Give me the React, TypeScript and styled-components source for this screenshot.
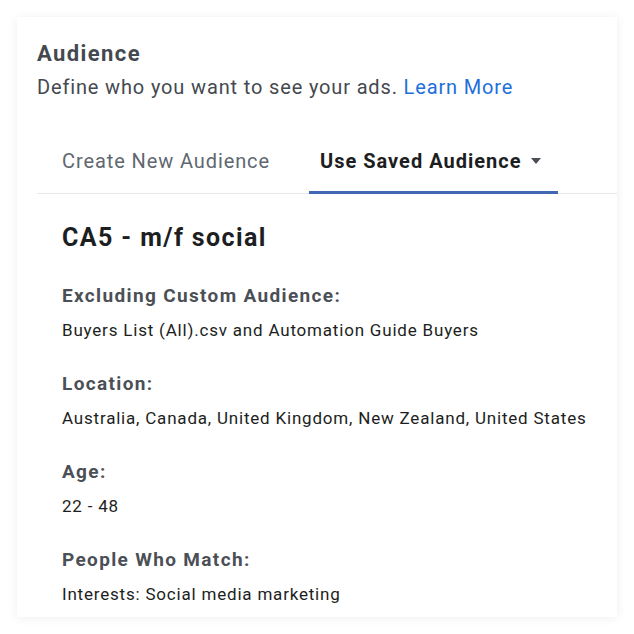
import React from 'react';
import styled, { createGlobalStyle } from 'styled-components';

const Global = createGlobalStyle`
  body {
    margin: 0;
    background: #ffffff;
    font-family: Roboto, "Liberation Sans", sans-serif;
  }
`;

const Page = styled.div`
  padding: 17px;
`;

const Card = styled.div`
  width: 600px;
  height: 600px;
  box-sizing: border-box;
  background: #fff;
  box-shadow: 0 1px 10px rgba(0, 0, 0, 0.07);
  padding: 23px 0 0 20px;
  overflow: hidden;
`;

const Title = styled.h2`
  margin: 0;
  font-size: 22px;
  line-height: 28px;
  font-weight: 700;
  letter-spacing: 1.4px;
  color: #444950;
`;

const Subtitle = styled.p`
  margin: 7px 0 0;
  font-size: 20px;
  line-height: 24px;
  letter-spacing: 0.85px;
  color: #444950;
`;

const Link = styled.a`
  color: #216fdb;
  text-decoration: none;
`;

const Tabs = styled.div`
  display: flex;
  gap: 28px;
  margin-top: 50px;
  padding-left: 14px;
  border-bottom: 1px solid #e6e7e9;
`;

const Tab = styled.div<{ $active?: boolean }>`
  display: flex;
  align-items: center;
  gap: 10px;
  padding: 0 ${p => (p.$active ? 17 : 11)}px 18px 11px;
  font-size: 20px;
  line-height: 24px;
  letter-spacing: ${p => (p.$active ? 1 : 0.9)}px;
  font-weight: ${p => (p.$active ? 700 : 400)};
  color: ${p => (p.$active ? '#1c1e21' : '#606770')};
  border-bottom: 3px solid ${p => (p.$active ? '#4267b2' : 'transparent')};
  margin-bottom: -1px;
`;

const Caret = styled.span`
  width: 0;
  height: 0;
  border-left: 5px solid transparent;
  border-right: 5px solid transparent;
  border-top: 6px solid #4b4f56;
`;

const Content = styled.div`
  padding: 29px 0 0 25px;
`;

const Name = styled.h3`
  margin: 0 0 31px;
  font-size: 25px;
  line-height: 30px;
  font-weight: 700;
  letter-spacing: 1.4px;
  color: #1c1e21;
`;

const Field = styled.div`
  margin-bottom: 30px;
`;

const Label = styled.div`
  font-size: 19px;
  line-height: 24px;
  font-weight: 700;
  letter-spacing: 1.35px;
  color: #4b4f56;
`;

const Value = styled.div`
  margin-top: 10px;
  font-size: 17px;
  line-height: 24px;
  letter-spacing: 0.8px;
  color: #1c1e21;
`;

const fields = [
  { label: 'Excluding Custom Audience:', value: 'Buyers List (All).csv and Automation Guide Buyers' },
  { label: 'Location:', value: 'Australia, Canada, United Kingdom, New Zealand, United States' },
  { label: 'Age:', value: '22 - 48' },
  { label: 'People Who Match:', value: 'Interests: Social media marketing' },
];

export default function App() {
  return (
    <Page>
      <Global />
      <Card>
        <Title>Audience</Title>
        <Subtitle>
          Define who you want to see your ads. <Link href="#">Learn More</Link>
        </Subtitle>
        <Tabs>
          <Tab>Create New Audience</Tab>
          <Tab $active>
            Use Saved Audience <Caret />
          </Tab>
        </Tabs>
        <Content>
          <Name>CA5 - m/f social</Name>
          {fields.map(f => (
            <Field key={f.label}>
              <Label>{f.label}</Label>
              <Value>{f.value}</Value>
            </Field>
          ))}
        </Content>
      </Card>
    </Page>
  );
}
